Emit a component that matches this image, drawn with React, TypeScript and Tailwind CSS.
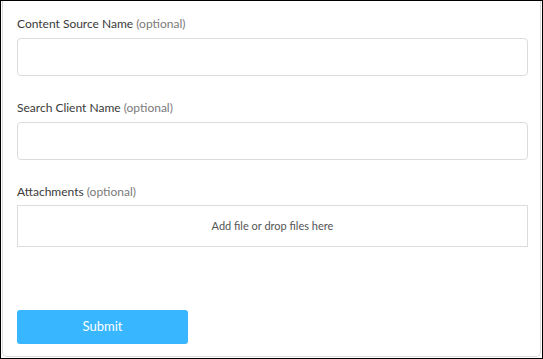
export default function App() {
  const fields = ['Content Source Name', 'Search Client Name'];

  return (
    <div className="w-[543px] h-[359px] border border-black bg-white px-px pb-px font-['Lato','Open_Sans',sans-serif]">
      <div className="h-full border-x border-b border-[#dcdcdc] rounded-b-[5px] pl-[14px] pr-[12px] pt-[15px] flex flex-col">
        {fields.map((f) => (
          <div key={f} className="mb-[24px]">
            <label className="block text-[12px] leading-[16px] text-[#3a3a3a] mb-[6px]">
              {f} <span className="text-[#7a7a7a]">(optional)</span>
            </label>
            <input
              type="text"
              className="block w-full h-[38px] border border-[#dcdcdc] rounded-[4px] bg-white outline-none px-2 text-[12px]"
            />
          </div>
        ))}

        <div>
          <label className="block text-[12px] leading-[16px] text-[#3a3a3a] mb-[5px]">
            Attachments <span className="text-[#7a7a7a]">(optional)</span>
          </label>
          <div className="h-[42px] border border-[#dcdcdc] flex items-center justify-center text-[11px] text-[#555]">
            Add file or drop files here
          </div>
        </div>

        <div className="mt-auto mb-[12px]">
          <button className="w-[171px] h-[34px] rounded-[3px] bg-[#38b6ff] text-white text-[13px]">
            Submit
          </button>
        </div>
      </div>
    </div>
  );
}
